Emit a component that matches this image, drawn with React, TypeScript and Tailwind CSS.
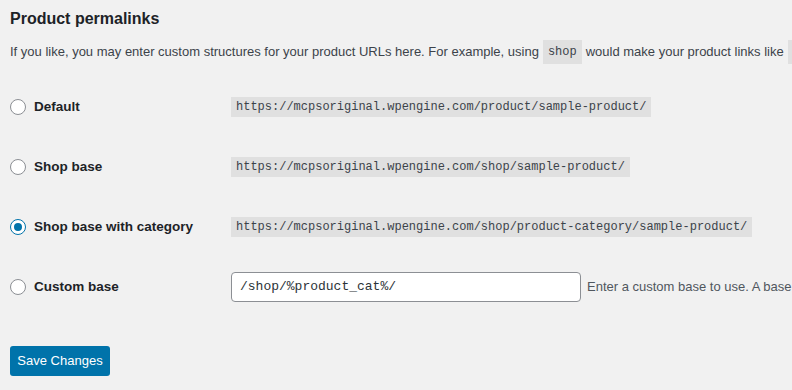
import React from 'react';

const sans = '"Liberation Sans", Arial, sans-serif';
const mono = '"Liberation Mono", "Courier New", monospace';

const rows = [
  { label: 'Default', url: 'https://mcpsoriginal.wpengine.com/product/sample-product/', checked: false },
  { label: 'Shop base', url: 'https://mcpsoriginal.wpengine.com/shop/sample-product/', checked: false },
  {
    label: 'Shop base with category',
    url: 'https://mcpsoriginal.wpengine.com/shop/product-category/sample-product/',
    checked: true,
  },
];

function Radio({ checked }: { checked: boolean }) {
  return (
    <span
      className={
        checked
          ? 'flex h-4 w-4 shrink-0 items-center justify-center rounded-full border border-[#0073aa] bg-white'
          : 'flex h-4 w-4 shrink-0 items-center justify-center rounded-full border border-[#8c8f94] bg-white'
      }
    >
      {checked && <span className="h-2 w-2 rounded-full bg-[#0073aa]" />}
    </span>
  );
}

export default function App() {
  return (
    <div
      className="h-[390px] w-[792px] overflow-hidden whitespace-nowrap bg-[#f1f1f1] px-[10px] text-[#3c434a]"
      style={{ fontFamily: sans }}
    >
      {/* Heading */}
      <div className="flex h-[38px] items-center">
        <h2 className="text-[16px] font-semibold text-[#1d2327]">Product permalinks</h2>
      </div>

      {/* Intro */}
      <div className="flex h-[28px] items-center text-[13px]">
        If you like, you may enter custom structures for your product URLs here. For example, using
        <code className="mx-[4px] bg-[#e0e0e0] px-[5px] py-[3px] text-[12px]" style={{ fontFamily: mono }}>
          shop
        </code>
        would make your product links like
        <code className="ml-[4px] bg-[#e0e0e0] px-[5px] py-[3px] text-[12px]" style={{ fontFamily: mono }}>
          https://mcpsoriginal.wpengine.com/shop/sample-product/
        </code>
      </div>

      {/* Options */}
      <div className="mt-[11px]">
        {rows.map((r) => (
          <div key={r.label} className="flex h-[60px] items-center">
            <div className="flex w-[221px] shrink-0 items-center gap-[8px]">
              <Radio checked={r.checked} />
              <span className="text-[13.5px] font-semibold text-[#1d2327]">{r.label}</span>
            </div>
            <code
              className="flex h-[20px] shrink-0 items-center bg-[#e0e0e0] px-[5px] text-[12px] text-[#3c434a]"
              style={{ fontFamily: mono }}
            >
              {r.url}
            </code>
          </div>
        ))}
        <div className="flex h-[60px] items-center">
          <div className="flex w-[221px] shrink-0 items-center gap-[8px]">
            <Radio checked={false} />
            <span className="text-[13.5px] font-semibold text-[#1d2327]">Custom base</span>
          </div>
          <div className="flex h-[30px] w-[350px] shrink-0 items-center rounded-[4px] border border-[#8c8f94] bg-white px-[8px]">
            <span className="text-[13px] text-[#2c3338]" style={{ fontFamily: mono }}>
              /shop/%product_cat%/
            </span>
          </div>
          <span className="ml-[6px] shrink-0 text-[13px] text-[#50575e]">
            Enter a custom base to use. A base must be set or WordPress will use default instead.
          </span>
        </div>
      </div>

      {/* Submit */}
      <button className="mt-[29px] flex h-[30px] w-[100px] items-center justify-center rounded-[3px] bg-[#0073aa] text-[13px] text-white">
        Save Changes
      </button>
    </div>
  );
}
